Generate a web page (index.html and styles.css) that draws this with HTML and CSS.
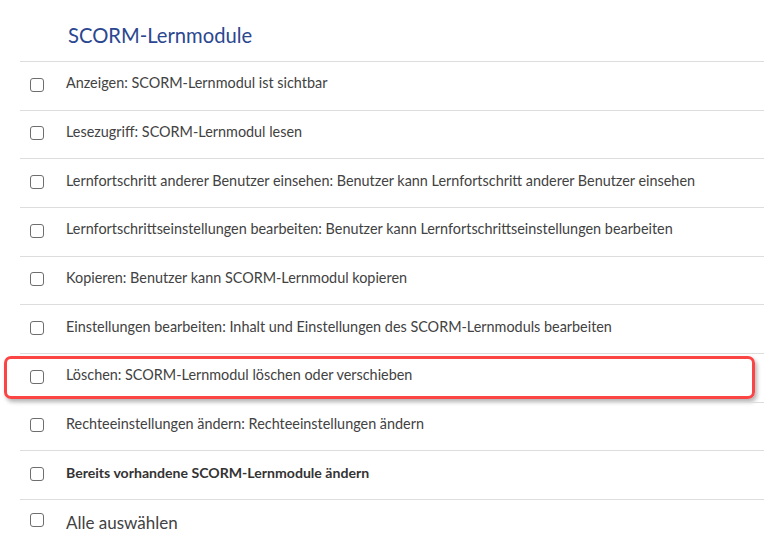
FILE: index.html
```html
<!DOCTYPE html>
<html lang="de">
<head>
<meta charset="utf-8">
<title>SCORM-Lernmodule</title>
<link rel="stylesheet" href="styles.css">
</head>
<body>
<section class="perm-block">
  <h2 class="perm-title">SCORM-Lernmodule</h2>
  <ul class="perm-list">
    <li class="perm-row"><span class="cb"></span><span class="perm-label">Anzeigen: SCORM-Lernmodul ist sichtbar</span></li>
    <li class="perm-row"><span class="cb"></span><span class="perm-label">Lesezugriff: SCORM-Lernmodul lesen</span></li>
    <li class="perm-row"><span class="cb"></span><span class="perm-label">Lernfortschritt anderer Benutzer einsehen: Benutzer kann Lernfortschritt anderer Benutzer einsehen</span></li>
    <li class="perm-row"><span class="cb"></span><span class="perm-label">Lernfortschrittseinstellungen bearbeiten: Benutzer kann Lernfortschrittseinstellungen bearbeiten</span></li>
    <li class="perm-row"><span class="cb"></span><span class="perm-label">Kopieren: Benutzer kann SCORM-Lernmodul kopieren</span></li>
    <li class="perm-row"><span class="cb"></span><span class="perm-label">Einstellungen bearbeiten: Inhalt und Einstellungen des SCORM-Lernmoduls bearbeiten</span></li>
    <li class="perm-row is-marked"><span class="cb"></span><span class="perm-label">Löschen: SCORM-Lernmodul löschen oder verschieben</span><span class="mark"></span></li>
    <li class="perm-row"><span class="cb"></span><span class="perm-label">Rechteeinstellungen ändern: Rechteeinstellungen ändern</span></li>
    <li class="perm-row"><span class="cb"></span><span class="perm-label perm-strong">Bereits vorhandene SCORM-Lernmodule ändern</span></li>
    <li class="perm-row perm-all"><span class="cb"></span><span class="perm-label">Alle auswählen</span></li>
  </ul>
</section>
</body>
</html>
```
FILE: styles.css
```css
html, body {
  margin: 0;
  padding: 0;
  background: #ffffff;
}

body {
  font-family: "Lato", "Open Sans", sans-serif;
  color: #424242;
  width: 764px;
  height: 546px;
  overflow: hidden;
}

.perm-title {
  margin: 0;
  height: 61px;
  box-sizing: border-box;
  padding: 21px 0 0 68px;
  font-size: 20.2px;
  font-weight: 400;
  color: #2b4790;
  line-height: 28px;
}

.perm-list {
  list-style: none;
  margin: 0 0 0 20px;
  padding: 0;
}

.perm-row {
  position: relative;
  display: flex;
  align-items: center;
  height: 48.67px;
  box-sizing: border-box;
  border-top: 1px solid #dddddd;
  padding: 0 0 2px 10px;
  font-size: 14.4px;
}

.cb {
  flex: none;
  width: 14px;
  height: 14px;
  box-sizing: border-box;
  border: 1.5px solid #6e6e6e;
  border-radius: 3px;
  background: #fff;
}

.perm-label {
  margin: 0 0 4px 22px;
  white-space: nowrap;
}

.perm-strong {
  font-weight: 700;
  font-size: 14.1px;
  color: #333;
}

.perm-all {
  align-items: flex-start;
  padding-top: 13px;
}

.perm-all .perm-label {
  font-size: 17px;
  line-height: 20px;
  margin-bottom: 0;
}

.mark {
  position: absolute;
  left: -16px;
  right: 9px;
  top: 2px;
  bottom: 3px;
  border: 3px solid #fb4444;
  border-radius: 7px;
  box-shadow: 2px 3px 4px rgba(0, 0, 0, 0.3);
  pointer-events: none;
}
```
